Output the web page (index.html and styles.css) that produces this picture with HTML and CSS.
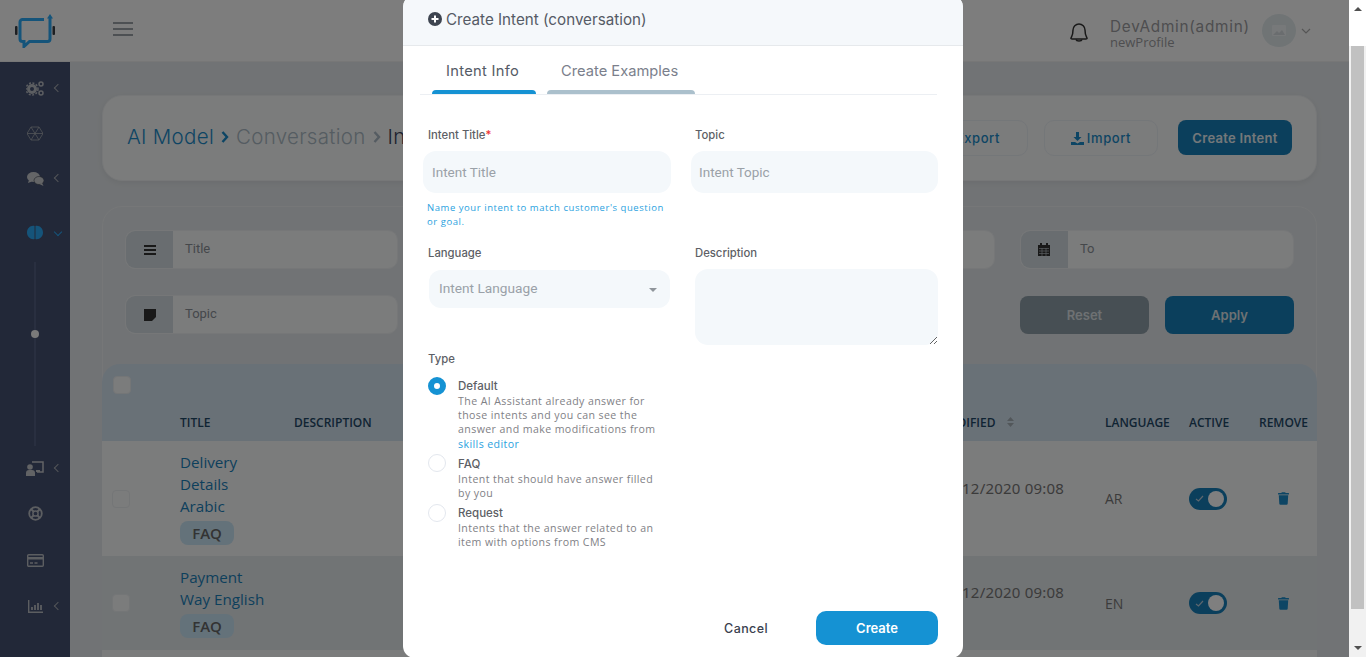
FILE: index.html
```html
<!DOCTYPE html>
<html lang="en">
<head>
    <meta charset="UTF-8">
    <meta name="viewport" content="width=device-width, initial-scale=1.0">
    <title>Create Intent</title>
    <link rel="stylesheet" href="styles.css">
</head>
<body>
<div class="window">
    <div class="page">
        <header class="topbar">
            <svg class="logo" width="42" height="34" viewBox="0 0 42 34">
                <rect x="1" y="12" width="2.500" height="9" rx="1" fill="#3a3f44"/>
                <rect x="38.500" y="12" width="2.500" height="9" rx="1" fill="#3a3f44"/>
                <path d="M30 5.500H8.500a2.500 2.500 0 0 0-2.500 2.500v17a2.500 2.500 0 0 0 2.500 2.500h1.500v5l5.500-5H33.500a2.500 2.500 0 0 0 2.500-2.500V4" fill="none" stroke="#2aa8f5" stroke-width="3"/>
                <path d="M36 0l-3 4.500h6z" fill="#2aa8f5"/>
            </svg>
            <svg class="burger" width="20" height="14" viewBox="0 0 20 14"><path d="M0 1h20M0 7h20M0 13h20" stroke="#9aa0a6" stroke-width="2"/></svg>
            <div class="topbar-right">
                <svg class="bell" width="20" height="22" viewBox="0 0 20 22"><path d="M2 17c1-2 2-3 2-8a6 6 0 0 1 12 0c0 5 1 6 2 8 .3 .6-.5 1-1 1H3c-.5 0-1.300-.4-1-1z" fill="none" stroke="#333" stroke-width="1.500"/><path d="M7 18.500c.5 2 5.500 2 6 0" fill="none" stroke="#333" stroke-width="1.500"/></svg>
                <div class="user">
                    <div class="user-name">DevAdmin(admin)</div>
                    <div class="user-profile">newProfile</div>
                </div>
                <div class="avatar">
                    <svg width="14" height="11" viewBox="0 0 14 11"><rect width="14" height="11" rx="1" fill="#eef2f4"/><path d="M1 10l4-4 2 2 3-3 3 5z" fill="#d5dade"/></svg>
                </div>
                <svg width="10" height="6" viewBox="0 0 10 6"><path d="M1 1l4 4 4-4" fill="none" stroke="#aaa" stroke-width="1.200"/></svg>
            </div>
        </header>

        <div class="layout">
            <nav class="sidebar">
                <div class="nav-item">
                    <svg width="18" height="15" viewBox="0 0 18 15"><circle cx="6" cy="8" r="3.500" fill="none" stroke="#b9bcc2" stroke-width="3"/><circle cx="6" cy="8" r="6" fill="none" stroke="#b9bcc2" stroke-width="1.500" stroke-dasharray="2 1.500"/><circle cx="15" cy="3" r="2" fill="none" stroke="#b9bcc2" stroke-width="1.500"/><circle cx="15" cy="12" r="2" fill="none" stroke="#b9bcc2" stroke-width="1.500"/></svg>
                    <span class="nav-arrow"></span>
                </div>
                <div class="nav-item">
                    <svg width="16" height="15" viewBox="0 0 16 15"><path d="M4 1h8l4 6.500-4 6.500H4L0 7.500zM4 1l8 13M12 1L4 14M0 7.500h16" fill="none" stroke="#a5a9b0" stroke-width=".8"/></svg>
                </div>
                <div class="nav-item">
                    <svg width="17" height="14" viewBox="0 0 17 14"><ellipse cx="6.500" cy="5" rx="6.500" ry="5" fill="#c9cbce"/><path d="M2 8l-1 3 4-1.500z" fill="#c9cbce"/><ellipse cx="12" cy="8.500" rx="5" ry="4" fill="#c9cbce" stroke="#373e4d" stroke-width=".6"/><path d="M15 11l1.500 3-4-2z" fill="#c9cbce"/></svg>
                    <span class="nav-arrow"></span>
                </div>
                <div class="nav-item nav-active">
                    <svg width="16" height="15" viewBox="0 0 16 15"><path d="M7.500 1C4 0 0 3 0 7.500S4 15 7.500 14zM8.500 1C12 0 16 3 16 7.500S12 15 8.500 14z" fill="#2aa8f5"/></svg>
                    <span class="nav-arrow nav-arrow-down"></span>
                </div>
                <div class="nav-slider"><span class="nav-dot"></span></div>
                <div class="nav-item">
                    <svg width="18" height="15" viewBox="0 0 18 15"><path d="M6 1h11v10h-6" fill="none" stroke="#c4c6ca" stroke-width="1.500"/><circle cx="4" cy="6" r="2.800" fill="#c4c6ca"/><path d="M0 15v-3a3 3 0 0 1 3-3h3a3 3 0 0 1 3 3v3zM10 9h4v2h-4z" fill="#c4c6ca"/></svg>
                    <span class="nav-arrow"></span>
                </div>
                <div class="nav-item">
                    <svg width="15" height="15" viewBox="0 0 15 15"><circle cx="7.500" cy="7.500" r="6.300" fill="none" stroke="#b9bcc2" stroke-width="1.800"/><circle cx="7.500" cy="7.500" r="2.600" fill="none" stroke="#b9bcc2" stroke-width="1.500"/><path d="M3 3l2.500 2.500M12 3L9.500 5.500M3 12l2.500-2.500M12 12L9.500 9.500" stroke="#b9bcc2" stroke-width="2"/></svg>
                </div>
                <div class="nav-item nav-card">
                    <svg width="17" height="13" viewBox="0 0 17 13"><rect x=".7" y=".7" width="15.600" height="11.600" rx="1" fill="none" stroke="#b9bcc2" stroke-width="1.400"/><rect x="1" y="3" width="15" height="2.500" fill="#b9bcc2"/><path d="M3 9h3M7.500 9h3" stroke="#b9bcc2" stroke-width="1.300"/></svg>
                </div>
                <div class="nav-item nav-chart">
                    <svg width="15" height="13" viewBox="0 0 15 13"><path d="M.7 0v12.300H15" fill="none" stroke="#b9bcc2" stroke-width="1.400"/><path d="M4 10V7M7 10V5M10 10V3M13 10V5" stroke="#b9bcc2" stroke-width="1.800"/></svg>
                    <span class="nav-arrow"></span>
                </div>
            </nav>

            <main class="content">
                <section class="card title-card">
                    <div class="breadcrumb">
                        <span class="crumb-root">AI Model</span>
                        <svg width="8" height="12" viewBox="0 0 8 12"><path d="M1.500 1l4.500 5-4.500 5" fill="none" stroke="#1b8bc8" stroke-width="2.400"/></svg>
                        <span class="crumb-mid">Conversation</span>
                        <svg width="8" height="12" viewBox="0 0 8 12"><path d="M1.500 1l4.500 5-4.500 5" fill="none" stroke="#aab8c4" stroke-width="2.400"/></svg>
                        <span class="crumb-last">Intents</span>
                    </div>
                    <div class="title-actions">
                        <button class="btn-outline btn-export">Export</button>
                        <button class="btn-outline btn-import">
                            <svg width="13" height="13" viewBox="0 0 13 13"><path d="M5 0h3v5h2.500L6.500 9 2.500 5H5zM0 10h4l2.500 1.500L9 10h4v3H0z" fill="#1b8bc8"/></svg>
                            Import
                        </button>
                        <button class="btn-primary">Create Intent</button>
                    </div>
                </section>

                <section class="card list-card">
                    <div class="filters">
                        <div class="filter">
                            <span class="filter-addon"><svg width="12" height="10" viewBox="0 0 12 10"><path d="M0 1h12M0 5h12M0 9h12" stroke="#333" stroke-width="2"/></svg></span>
                            <span class="filter-text">Title</span>
                        </div>
                        <div class="filter"></div>
                        <div class="filter"></div>
                        <div class="filter">
                            <span class="filter-addon"><svg width="12" height="13" viewBox="0 0 12 13"><path d="M2 0h2v2h4V0h2v2h2v11H0V2h2z" fill="#333"/><path d="M1 5.500h10M1 8h10M1 10.500h10M4 5v8M8 5v8" stroke="#b4bcc2" stroke-width=".7"/></svg></span>
                            <span class="filter-text">To</span>
                        </div>
                        <div class="filter">
                            <span class="filter-addon"><svg width="12" height="12" viewBox="0 0 12 12"><path d="M0 0h12v8L8 12H0z" fill="#333"/></svg></span>
                            <span class="filter-text">Topic</span>
                        </div>
                        <div class="filter-spacer"></div>
                        <div class="filter-spacer"></div>
                        <div class="filter-actions">
                            <button class="btn-reset">Reset</button>
                            <button class="btn-apply">Apply</button>
                        </div>
                    </div>

                    <div class="table">
                        <div class="table-head">
                            <div class="head-check"><span class="check"></span></div>
                            <div class="row-grid head-row">
                                <span></span>
                                <span>TITLE</span>
                                <span>DESCRIPTION</span>
                                <span class="head-modified">MODIFIED
                                    <svg width="7" height="10" viewBox="0 0 7 10"><path d="M3.500 0L7 4H0zM3.500 10L0 6h7z" fill="#a5aeb5"/></svg>
                                </span>
                                <span>LANGUAGE</span>
                                <span>ACTIVE</span>
                                <span>REMOVE</span>
                            </div>
                        </div>

                        <div class="row-grid row row-first">
                            <div class="cell-check"><span class="check"></span></div>
                            <div class="cell-title">
                                <a class="intent-link">Delivery Details Arabic</a>
                                <span class="badge">FAQ</span>
                            </div>
                            <div></div>
                            <div class="cell-date">02/12/2020 09:08</div>
                            <div class="cell-text">AR</div>
                            <div class="cell-text"><span class="toggle"><svg width="9" height="7" viewBox="0 0 9 7"><path d="M1 4l2.500 2L8 1" fill="none" stroke="#bcd" stroke-width="1.200"/></svg><span class="knob"></span></span></div>
                            <div class="cell-trash"><svg width="11" height="13" viewBox="0 0 448 512"><path fill="#1b8bc8" d="M432 32H312l-9.400-18.700A24 24 0 0 0 281.100 0H166.800a23.720 23.720 0 0 0-21.400 13.300L136 32H16A16 16 0 0 0 0 48v32a16 16 0 0 0 16 16h416a16 16 0 0 0 16-16V48a16 16 0 0 0-16-16zM53.200 467a48 48 0 0 0 47.900 45h245.800a48 48 0 0 0 47.900-45L416 128H32z"/></svg></div>
                        </div>
                        <div class="row-grid row row-second">
                            <div class="cell-check"><span class="check"></span></div>
                            <div class="cell-title">
                                <a class="intent-link">Payment Way English</a>
                                <span class="badge">FAQ</span>
                            </div>
                            <div></div>
                            <div class="cell-date">02/12/2020 09:08</div>
                            <div class="cell-text">EN</div>
                            <div class="cell-text"><span class="toggle"><svg width="9" height="7" viewBox="0 0 9 7"><path d="M1 4l2.500 2L8 1" fill="none" stroke="#bcd" stroke-width="1.200"/></svg><span class="knob"></span></span></div>
                            <div class="cell-trash"><svg width="11" height="13" viewBox="0 0 448 512"><path fill="#1b8bc8" d="M432 32H312l-9.400-18.700A24 24 0 0 0 281.100 0H166.800a23.720 23.720 0 0 0-21.400 13.300L136 32H16A16 16 0 0 0 0 48v32a16 16 0 0 0 16 16h416a16 16 0 0 0 16-16V48a16 16 0 0 0-16-16zM53.200 467a48 48 0 0 0 47.900 45h245.800a48 48 0 0 0 47.900-45L416 128H32z"/></svg></div>
                        </div>
                        <div class="row row-third"></div>
                    </div>
                </section>
            </main>
        </div>

        <div class="backdrop"></div>
    </div>

    <div class="modal">
        <div class="modal-header">
            <svg width="14" height="14" viewBox="0 0 14 14"><circle cx="7" cy="7" r="7" fill="#3d4450"/><path d="M7 3.500v7M3.500 7h7" stroke="#fff" stroke-width="2"/></svg>
            <span>Create Intent (conversation)</span>
        </div>
        <div class="tabs">
            <div class="tab tab-active">Intent Info</div>
            <div class="tab tab-examples">Create Examples</div>
        </div>
        <form class="intent-form">
            <div class="form-col form-col-left">
                <label class="form-label">Intent Title<span class="required">*</span></label>
                <input class="form-input" type="text" placeholder="Intent Title">
                <p class="form-hint">Name your intent to match customer's question<br>or goal.</p>
                <label class="form-label label-language">Language</label>
                <div class="form-select">
                    <span>Intent Language</span>
                    <span class="select-caret"></span>
                </div>
                <label class="form-label label-type">Type</label>
                <div class="radio-list">
                    <div class="radio-row">
                        <span class="radio radio-on"></span>
                        <div>
                            <div class="radio-title">Default</div>
                            <div class="radio-desc">The AI Assistant already answer for<br>those intents and you can see the<br>answer and make modifications from<br><a class="skills-link">skills editor</a></div>
                        </div>
                    </div>
                    <div class="radio-row">
                        <span class="radio"></span>
                        <div>
                            <div class="radio-title">FAQ</div>
                            <div class="radio-desc">Intent that should have answer filled<br>by you</div>
                        </div>
                    </div>
                    <div class="radio-row">
                        <span class="radio"></span>
                        <div>
                            <div class="radio-title">Request</div>
                            <div class="radio-desc">Intents that the answer related to an<br>item with options from CMS</div>
                        </div>
                    </div>
                </div>
            </div>
            <div class="form-col form-col-right">
                <label class="form-label">Topic</label>
                <input class="form-input" type="text" placeholder="Intent Topic">
                <label class="form-label label-description">Description</label>
                <textarea class="form-textarea"></textarea>
            </div>
        </form>
        <div class="modal-footer">
            <button class="btn-cancel" type="button">Cancel</button>
            <button class="btn-create" type="button">Create</button>
        </div>
    </div>

    <div class="scrollbar">
        <span class="scroll-up"></span>
        <div class="scroll-thumb"></div>
        <span class="scroll-down"></span>
    </div>
</div>
</body>
</html>
```

FILE: styles.css
```css
* {
    box-sizing: border-box;
}
body {
    margin: 0;
    height: 657px;
    overflow: hidden;
    font-family: "Open Sans", Arial, sans-serif;
    color: #555;
}
button {
    font-family: Inter, Arial, sans-serif;
    border: none;
    cursor: pointer;
}
.window {
    position: relative;
    display: flex;
    width: 1366px;
    height: 657px;
    overflow: hidden;
}
.page {
    position: relative;
    width: 1349px;
    height: 657px;
    display: flex;
    flex-direction: column;
    background-color: #e3e7ea;
}
.backdrop {
    position: absolute;
    top: 0;
    left: 0;
    right: 0;
    bottom: 0;
    background-color: rgba(0, 0, 0, 0.5);
}

/* top bar */
.topbar {
    height: 62px;
    flex-shrink: 0;
    display: flex;
    align-items: center;
    padding-left: 14px;
    padding-right: 38px;
    background-color: #fbfbfb;
    border-bottom: 1px solid #eeeeee;
}
.burger {
    margin-left: 57px;
    margin-top: -3px;
}
.topbar-right {
    margin-left: auto;
    display: flex;
    align-items: center;
}
.bell {
    margin-right: 21px;
    margin-top: 3px;
}
.user {
    width: 152px;
    margin-top: 6px;
}
.user-name {
    font-family: Inter, Arial, sans-serif;
    font-size: 15.3px;
    letter-spacing: 0.75px;
    line-height: 16px;
    color: #9c9ca0;
}
.user-profile {
    font-size: 13px;
    line-height: 14px;
    color: #9c9ca0;
}
.avatar {
    width: 34px;
    height: 33px;
    border-radius: 50%;
    background-color: #e0e8ea;
    display: flex;
    align-items: center;
    justify-content: center;
    margin-right: 5px;
}

/* sidebar */
.layout {
    flex: 1;
    display: flex;
    min-height: 0;
}
.sidebar {
    width: 70px;
    flex-shrink: 0;
    padding-top: 4px;
    background-color: #445070;
}
.nav-item {
    position: relative;
    height: 45px;
    display: flex;
    align-items: center;
    justify-content: center;
}
.nav-active {
    margin-top: 9px;
}
.nav-card {
    margin-top: 2px;
}
.nav-chart {
    margin-top: 1px;
}
.nav-arrow {
    position: absolute;
    left: 55px;
    top: 19px;
    width: 6px;
    height: 6px;
    border-left: 1px solid #a5a9b0;
    border-bottom: 1px solid #a5a9b0;
    transform: rotate(45deg);
}
.nav-arrow-down {
    border-color: #2aa8f5;
    transform: rotate(-45deg);
}
.nav-slider {
    position: relative;
    width: 2px;
    height: 184px;
    margin: 7px 0 0 34px;
    background-color: #525e80;
}
.nav-dot {
    position: absolute;
    left: -3px;
    top: 68px;
    width: 8px;
    height: 8px;
    border-radius: 50%;
    background-color: #f4f4f4;
}

/* content */
.content {
    flex: 1;
    min-width: 0;
    padding: 33px 32px 0;
}
.card {
    border: 1px solid #eceff1;
    border-radius: 20px;
    background-color: #f7f8f8;
}
.title-card {
    height: 86px;
    display: flex;
    align-items: center;
    justify-content: space-between;
    padding: 0 24px;
    box-shadow: 0 2px 6px rgba(0, 0, 0, 0.06);
}
.breadcrumb {
    display: flex;
    align-items: center;
    gap: 7px;
    margin-top: -3px;
    font-family: Inter, Arial, sans-serif;
    font-size: 20.5px;
    font-weight: 300;
    letter-spacing: 0.3px;
    white-space: nowrap;
}
.crumb-root {
    color: #1b8bc8;
}
.crumb-mid {
    color: #aab8c4;
}
.crumb-last {
    color: #39435e;
}
.title-actions {
    display: flex;
    gap: 16px;
}
.btn-outline {
    height: 36px;
    border: 1px solid #e8eef3;
    border-radius: 10px;
    background-color: transparent;
    color: #1b8bc8;
    font-size: 13px;
    font-weight: 500;
    letter-spacing: 0.6px;
}
.btn-export {
    width: 114px;
    text-align: right;
    padding-right: 27px;
}
.btn-import {
    width: 114px;
    display: flex;
    align-items: center;
    justify-content: center;
    gap: 3px;
}
.btn-primary {
    width: 114px;
    height: 35px;
    margin-left: 4px;
    border-radius: 8px;
    background-color: #167fb8;
    color: #e8f0f5;
    font-size: 13px;
    font-weight: 600;
    letter-spacing: 0.3px;
}
.list-card {
    margin-top: 25px;
    height: 520px;
    background-color: #e3e7ea;
    border-color: #eceff1;
}

/* filters */
.filters {
    display: grid;
    grid-template-columns: repeat(3, 273.33px) 274px;
    column-gap: 25px;
    row-gap: 26px;
    padding: 23px 22px 0;
}
.filter {
    height: 39px;
    display: flex;
    align-items: center;
    border: 1px solid #eceff1;
    border-radius: 10px;
    background-color: #f7f8f8;
    overflow: hidden;
}
.filter-addon {
    width: 47px;
    height: 100%;
    flex-shrink: 0;
    display: flex;
    align-items: center;
    justify-content: center;
    background-color: #d2dae0;
}
.filter-text {
    padding-left: 12px;
    margin-top: -2px;
    font-family: Roboto, Arial, sans-serif;
    font-size: 13px;
    color: #8a9097;
}
.filter-spacer {
    height: 39px;
}
.filter-actions {
    display: flex;
    justify-content: space-between;
}
.btn-reset,
.btn-apply {
    width: 129px;
    height: 38px;
    margin-top: 1px;
    border-radius: 8px;
    color: #dde3e7;
    font-size: 13px;
    font-weight: 600;
}
.btn-reset {
    background-color: #8f9ea8;
}
.btn-apply {
    background-color: #167fb8;
}

/* table */
.table {
    margin: 30px -1px 0 -1px;
}
.table-head {
    height: 77px;
    border-radius: 18px 18px 0 0;
    background-color: #d3e2ef;
}
.head-check {
    height: 39px;
    padding: 12px 0 0 11px;
}
.row-grid {
    display: grid;
    grid-template-columns: 78px 114px 1fr 171px 84px 70px 58px;
    align-items: center;
}
.head-row {
    height: 38px;
    font-size: 12px;
    font-weight: 600;
    color: #1f4866;
}
.head-modified {
    padding-left: 3px;
    white-space: nowrap;
}
.head-modified svg {
    margin-left: 8px;
}
.check {
    display: block;
    width: 18px;
    height: 18px;
    border: 1px solid #e9ecef;
    border-radius: 4px;
    background-color: #f7f8f8;
}
.row {
    font-size: 15px;
}
.row-first {
    height: 115px;
    background-color: #f7f8f8;
}
.row-second {
    height: 94px;
    background-color: #e3e8eb;
}
.row-third {
    height: 20px;
    background-color: #f7f8f8;
}
.cell-check {
    padding-left: 10px;
}
.cell-title {
    margin-top: -2px;
}
.intent-link {
    display: block;
    width: 92px;
    font-size: 15.2px;
    line-height: 22px;
    color: #1b80b8;
}
.badge {
    display: inline-block;
    width: 54px;
    height: 24px;
    margin-top: 4px;
    border-radius: 8px;
    background-color: #c8e4f4;
    font-size: 15px;
    font-weight: 600;
    line-height: 24px;
    text-align: center;
    color: #666;
}
.cell-date {
    padding-bottom: 22px;
    font-family: "Noto Sans", Arial, sans-serif;
    font-size: 15px;
    letter-spacing: 0.2px;
    white-space: nowrap;
    text-align: right;
    padding-right: 41px;
    color: #777;
}
.cell-text {
    color: #777;
    font-size: 14px;
}
.toggle {
    display: flex;
    align-items: center;
    justify-content: space-between;
    width: 38px;
    height: 22px;
    padding: 0 3px 0 6px;
    border-radius: 11px;
    background-color: #167fb8;
}
.knob {
    width: 16px;
    height: 16px;
    border-radius: 50%;
    background-color: #fff;
}
.cell-trash {
    padding-left: 19px;
    display: flex;
}

/* modal */
.modal {
    position: absolute;
    top: -5px;
    left: 403px;
    width: 560px;
    height: 663px;
    display: flex;
    flex-direction: column;
    border-radius: 12px;
    background-color: #fff;
    overflow: hidden;
}
.modal-header {
    height: 51px;
    flex-shrink: 0;
    display: flex;
    align-items: center;
    gap: 4px;
    padding: 0 0 2px 25px;
    background-color: #f5f8fb;
    border-bottom: 1px solid #e6e9ec;
    font-family: Inter, Arial, sans-serif;
    font-size: 15.2px;
    color: #555b66;
}
.tabs {
    height: 49px;
    flex-shrink: 0;
    display: flex;
    gap: 11px;
    margin: 0 26px 0 17px;
    padding-left: 12px;
    border-bottom: 1px solid #eceff3;
}
.tab {
    height: 48px;
    width: 148px;
    display: flex;
    flex-direction: column;
    padding: 16px 0 0 14px;
    font-family: Inter, Arial, sans-serif;
    font-size: 14.7px;
    white-space: nowrap;
    color: #7b7f8c;
}
.tab::after {
    content: "";
    height: 4px;
    margin: auto 0 0 -14px;
    border-radius: 4px 4px 0 0;
    background-color: #abc0cc;
}
.tab-active {
    width: 104px;
    letter-spacing: 0.3px;
    color: #555b66;
}
.tab-active::after {
    background-color: #1592d3;
}
.intent-form {
    display: flex;
    gap: 20px;
    padding: 32px 25px 0 20px;
}
.form-col {
    display: flex;
    flex-direction: column;
    width: 247px;
}
.form-col-left {
    width: 248px;
}
.form-label {
    height: 16px;
    margin-left: 5px;
    font-family: Inter, Arial, sans-serif;
    font-size: 11.3px;
    font-weight: 500;
    line-height: 16px;
    color: #5d5f66;
}
.form-col-right .form-label {
    margin-left: 4px;
}
.required {
    color: #e33;
}
.form-input {
    height: 42px;
    margin-top: 8px;
    padding: 0 9px;
    border: none;
    border-radius: 13px;
    background-color: #f4f8fb;
    font-family: Roboto, Arial, sans-serif;
    font-size: 13.5px;
    outline: none;
}
.form-col-right .form-input {
    padding: 0 8px;
}
.form-input::placeholder {
    color: #9aa1a8;
}
.form-hint {
    margin: 8px 0 0 4px;
    font-size: 9.5px;
    letter-spacing: 0.55px;
    line-height: 14px;
    color: #2aa2e0;
}
.label-language {
    margin-top: 16px;
}
.form-select {
    height: 38px;
    margin: 9px 1px 0 6px;
    padding: 0 13px 2px 10px;
    display: flex;
    align-items: center;
    justify-content: space-between;
    border-radius: 12px;
    background-color: #f4f8fb;
    font-family: Roboto, Arial, sans-serif;
    font-size: 13.7px;
    color: #9aa1a8;
}
.select-caret {
    width: 0;
    height: 0;
    border-left: 4px solid transparent;
    border-right: 4px solid transparent;
    border-top: 4px solid #8f959b;
    margin-top: 4px;
}
.label-type {
    margin-top: 43px;
}
.radio-list {
    margin-top: 12px;
    display: flex;
    flex-direction: column;
    gap: 6px;
}
.radio-row {
    display: flex;
    gap: 12px;
    padding-left: 5px;
}
.radio {
    flex-shrink: 0;
    width: 18px;
    height: 18px;
    margin-top: -2.5px;
    border: 1px solid #e3e7ee;
    border-radius: 50%;
    background-color: #fff;
}
.radio-on {
    border: 6px solid #1592d3;
}
.radio-title {
    font-family: Inter, Arial, sans-serif;
    font-size: 11.5px;
    font-weight: 500;
    line-height: 15px;
    color: #5d5f66;
}
.radio-desc {
    font-size: 10.6px;
    letter-spacing: 0.4px;
    line-height: 14.2px;
    white-space: nowrap;
    color: #7f8186;
}
.skills-link {
    color: #2aa2e0;
}
.form-col-right .label-description {
    margin-top: 52px;
    margin-left: 4px;
}
.form-textarea {
    height: 76px;
    margin: 8px 0 0 4px;
    width: 243px;
    border: none;
    border-radius: 13px;
    background-color: #f4f8fb;
    outline: none;
    resize: vertical;
}
.modal-footer {
    margin-top: auto;
    display: flex;
    align-items: center;
    justify-content: flex-end;
    gap: 48px;
    padding: 0 25px 13px 0;
}
.btn-cancel {
    background: none;
    padding: 1px 0 0;
    font-size: 12.5px;
    font-weight: 500;
    letter-spacing: 0.4px;
    color: #3a3f4f;
}
.btn-create {
    width: 122px;
    height: 34px;
    padding-top: 1px;
    border-radius: 10px;
    background-color: #1592d3;
    color: #fff;
    font-size: 13px;
    font-weight: 600;
}

/* scrollbar */
.scrollbar {
    width: 17px;
    height: 657px;
    position: relative;
    background: linear-gradient(#fff 46px, #f1f1f1 46px);
}
.scroll-thumb {
    position: absolute;
    top: 46px;
    left: 2px;
    width: 13px;
    height: 563px;
    background-color: #c1c1c1;
}
.scroll-up,
.scroll-down {
    position: absolute;
    left: 5px;
    width: 0;
    height: 0;
    border-left: 4px solid transparent;
    border-right: 4px solid transparent;
}
.scroll-up {
    top: 7px;
    border-bottom: 4px solid #505050;
}
.scroll-down {
    bottom: 7px;
    border-top: 4px solid #505050;
}
```
